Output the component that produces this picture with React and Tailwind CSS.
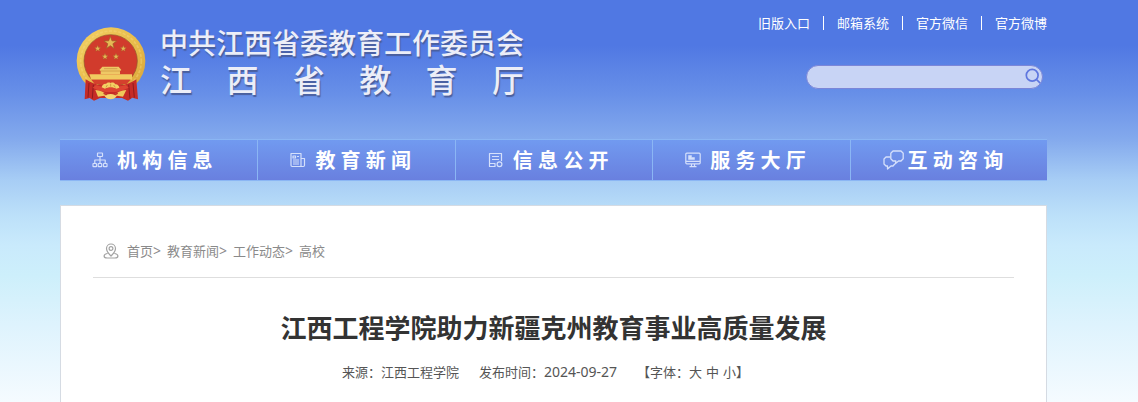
const topLinks = ['旧版入口', '邮箱系统', '官方微信', '官方微博'];
const crumbs = ['首页', '教育新闻', '工作动态', '高校'];
const fontSizes = ['大', '中', '小'];

const navItems = [
  { label: '机 构 信 息', Icon: OrgIcon },
  { label: '教 育 新 闻', Icon: NewsIcon },
  { label: '信 息 公 开', Icon: DocumentIcon },
  { label: '服 务 大 厅', Icon: ScreenIcon },
  { label: '互 动 咨 询', Icon: ChatIcon },
];

function Star({ x, y, r }) {
  return (
    <polygon
      transform={`translate(${x} ${y}) scale(${r})`}
      points="0,-1 0.25,-0.32 0.95,-0.31 0.38,0.12 0.59,0.81 0,0.4 -0.59,0.81 -0.38,0.12 -0.95,-0.31 -0.25,-0.32"
      fill="#e6b955"
      stroke="#9a5b24"
      strokeWidth="0.1"
    />
  );
}

function Emblem() {
  return (
    <svg className="h-[74px] w-[70px] shrink-0" viewBox="20 20 210 222" aria-hidden="true">
      <defs>
        <linearGradient id="gold" x1="0" y1="0" x2="1" y2="1">
          <stop offset="0" stopColor="#f3d166" />
          <stop offset="0.5" stopColor="#e9bd4c" />
          <stop offset="1" stopColor="#d9a338" />
        </linearGradient>
      </defs>
      {/* Wreath */}
      <ellipse cx="125" cy="122" rx="103" ry="101" fill="url(#gold)" />
      <ellipse cx="125" cy="122" rx="91" ry="90" fill="none" stroke="#f7dc83" strokeWidth="5" strokeDasharray="9 5" opacity="0.4" />
      <ellipse cx="124" cy="122" rx="80" ry="79" fill="#d13b2c" stroke="#8f5a2c" strokeWidth="2" />
      {/* Stars */}
      <Star x={123} y={68} r={20} />
      <Star x={85} y={85} r={10} />
      <Star x={162} y={85} r={10} />
      <Star x={107} y={109} r={10} />
      <Star x={140} y={109} r={10} />
      {/* Gate */}
      <path d="M99 139h49l8 10-4 3v10H94v-10l-4-3z" fill="#efc865" />
      <path d="M94 152h58M104 145h40" stroke="#b97c33" strokeWidth="1.5" />
      <path d="M60 162h128v16H66z" fill="#f1ca60" />
      <path d="M66 178h118l-12 13H76z" fill="#d4402d" />
      {/* Ribbons */}
      <path d="M49 177c16 10 30 16 48 18h56c20-2 33-8 48-18l5 60-17-5-13 9-18-8H92l-18 8-13-8-15 4z" fill="#c62c27" />
      <path d="M59 188l-3 44M72 193l-3 42M191 188l4 44M178 193l4 42" stroke="#8e1c1e" strokeWidth="3" />
      <path d="M80 194c18 6 30 6 44 6s30-1 46-6l8 8c-18 10-35 13-54 13s-38-3-54-13z" fill="#dc4432" />
      {/* Gear and wheat ends */}
      <path d="M97 201c2-8 8-12 13-10 4-5 9-5 14-3 6-3 11-1 14 4 6-1 11 4 12 10l-9 3c-10-6-24-6-34 0z" fill="#f3d063" />
      <path d="M110 201l4-7M124 199v-9M138 201l-5-7" stroke="#bd7e32" strokeWidth="2" />
      <path d="M78 209c14 0 26 8 37 14h18c11-7 24-14 38-14l-10 20-18-3c-8 9-29 11-38 0l-19 3z" fill="#efc85a" />
      <path d="M103 218l21 13 21-13" fill="none" stroke="#c4392a" strokeWidth="5" />
      <path d="M107 229c4-6 10-8 17-8s14 3 17 8c-9 10-25 10-34 0z" fill="#f5d673" />
    </svg>
  );
}

function NavSvg({ children }) {
  return (
    <svg
      className="size-4"
      viewBox="0 0 16 16"
      fill="none"
      stroke="currentColor"
      strokeWidth="1.2"
      strokeLinejoin="round"
      aria-hidden="true"
    >
      {children}
    </svg>
  );
}

function OrgIcon() {
  return (
    <NavSvg>
      <rect x="5.5" y="1" width="5" height="3.5" rx="0.5" />
      <path d="M8 4.5v6.5M2.8 11V8h10.4v3" />
      <rect x="1" y="11.5" width="3.5" height="3.2" rx="0.5" />
      <rect x="6.2" y="11.5" width="3.5" height="3.2" rx="0.5" />
      <rect x="11.5" y="11.5" width="3.5" height="3.2" rx="0.5" />
    </NavSvg>
  );
}

function NewsIcon() {
  return (
    <NavSvg>
      <path d="M11 14.5H2.2c-.7 0-1.2-.5-1.2-1.2V1.5h10v13zM11 6.5h3.5v6.8c0 .7-.5 1.2-1.2 1.2H11" />
      <path d="M3 4h2.5v2H3zM7 4.5h2M3 8h6M3 10h6M3 12h6" />
    </NavSvg>
  );
}

function DocumentIcon() {
  return (
    <NavSvg>
      <path d="M13.5 9V1.5h-12v13h6M4 4.5h7M4 7.5h7M1.5 11.5H7v3" />
      <circle cx="11.5" cy="12.2" r="2.4" />
    </NavSvg>
  );
}

function ScreenIcon() {
  return (
    <NavSvg>
      <rect x="0.8" y="1.2" width="14.4" height="10.6" rx="1" />
      <path d="M1 9.4h14M6.5 12v2.4M9.5 12v2.4M4.5 14.6h7" />
      <path d="M3.5 3.5h3v2h3v2h-6z" fill="currentColor" strokeWidth="0.5" />
    </NavSvg>
  );
}

function ChatIcon() {
  return (
    <svg
      className="h-5 w-[22px]"
      viewBox="0 0 22 20"
      fill="none"
      stroke="currentColor"
      strokeWidth="1.3"
      strokeLinejoin="round"
      aria-hidden="true"
    >
      <path d="M10 1h8l2.2 2.2v5.6L18 11h-2.5l-3 2.5.3-2.5H10L7.8 8.8V3.2z" />
      <path d="M7.5 7H3L1 9v5l2 2h1.5v3L8 16h2l2-2.2" />
    </svg>
  );
}

function PinIcon() {
  return (
    <svg
      className="size-4"
      viewBox="0 0 16 16"
      fill="none"
      stroke="#a3a3a3"
      strokeWidth="1.2"
      strokeLinecap="round"
      strokeLinejoin="round"
      aria-hidden="true"
    >
      <path d="M8 13C5.5 10.5 3.5 8 3.5 5.5a4.5 4.5 0 0 1 9 0C12.5 8 10.5 10.5 8 13z" />
      <circle cx="8" cy="5.5" r="1.9" />
      <path d="M4.2 10.5C2.3 11 1.1 11.9 1.1 13c0 1.2 1.4 2 3 2h7.8c1.6 0 3-.8 3-2 0-1.1-1.2-2-3.1-2.5" />
    </svg>
  );
}

function Header() {
  return (
    <header className="flex h-[139px] items-start justify-between">
      <a href="#" className="ml-4 mt-[27px] flex gap-3.5 text-[#eceef8]">
        <Emblem />
        <div className="-mt-px w-[364px] font-medium [text-shadow:1px_2px_1px_#4a5f9e]">
          <div className="whitespace-nowrap text-[28px] leading-[34px]">中共江西省委教育工作委员会</div>
          <div className="flex justify-between text-[32px] leading-10">
            {[...'江西省教育厅'].map((char) => (
              <span key={char}>{char}</span>
            ))}
          </div>
        </div>
      </a>

      <div className="flex flex-col items-end">
        <ul className="mt-3.5 flex items-center text-[13px] leading-[18px] text-white">
          {topLinks.map((link, i) => (
            <li key={link} className="flex items-center">
              {i > 0 && <span className="mx-[13px] h-3.5 w-px bg-white" />}
              <a href="#">{link}</a>
            </li>
          ))}
        </ul>
        <form
          className="mr-1 mt-[33px] flex h-6 w-[237px] items-center rounded-full border border-[#7b86d8] bg-[#c8d4f5]"
          onSubmit={(e) => e.preventDefault()}
        >
          <input type="text" aria-label="搜索" className="h-full min-w-0 flex-1 rounded-full px-3 text-[13px] outline-none" />
          <button type="submit" aria-label="搜索" className="mr-px shrink-0 pb-0.5 text-[#5f77df]">
            <svg className="size-4" viewBox="0 0 16 16" fill="none" stroke="currentColor" strokeWidth="1.7" strokeLinecap="round">
              <circle cx="7.2" cy="7.2" r="5.9" />
              <path d="M11.5 11.5l3.2 3.2" />
            </svg>
          </button>
        </form>
      </div>
    </header>
  );
}

function App() {
  return (
    <div className="min-h-screen bg-[linear-gradient(to_bottom,#5078e3_0px,#5078e3_45px,#6890e8_95px,#84aaed_140px,#a7cdf5_180px,#bce0f9_215px,#c9eafc_245px,#cdeffb_275px,#def3fd_325px,#f5fbff_402px)] pl-[60px] pr-[91px] font-['Noto_Sans','Noto_Sans_CJK_SC',sans-serif]">
      <Header />

      <nav className="grid grid-cols-5 border-y border-[#8bb6f4] bg-linear-to-b from-[#719af0] to-[#6980df]">
        {navItems.map(({ label, Icon }) => (
          <a
            key={label}
            href="#"
            className="flex h-10 items-center border-l border-[#8bb6f4] pl-8 text-white first:border-l-0"
          >
            <span className="w-[25px] shrink-0 text-[#d5e0fb]">
              <Icon />
            </span>
            <span className="whitespace-nowrap pt-0.5 text-xl font-bold">{label}</span>
          </a>
        ))}
      </nav>

      <main className="mt-6 min-h-[197px] border border-b-0 border-[#d5dbe3] bg-white px-8">
        <div className="flex h-[72px] items-end border-b border-[#dedede] pb-4 text-[13px] leading-5 text-[#8a8a8a]">
          <span className="ml-2.5 mr-2 pb-0.5">
            <PinIcon />
          </span>
          {crumbs.map((crumb, i) => (
            <span key={crumb} className="flex items-center">
              <a href="#">{crumb}</a>
              {i < crumbs.length - 1 && <span className="mr-1.5 text-sm leading-5">&gt;</span>}
            </span>
          ))}
        </div>

        <h1 className="mt-[30px] text-center text-[26px] font-bold leading-10 text-[#333]">
          江西工程学院助力新疆克州教育事业高质量发展
        </h1>
        <div className="mt-3.5 flex justify-center gap-5 pr-4 text-[13px] leading-5 text-[#555]">
          <span>来源：江西工程学院</span>
          <span className="flex">
            发布时间：<time className="text-sm leading-5">2024-09-27</time>
          </span>
          <span className="flex">
            【字体：
            <span className="flex gap-1">
              {fontSizes.map((size) => (
                <button key={size} type="button">{size}</button>
              ))}
            </span>
            】
          </span>
        </div>
      </main>
    </div>
  );
}

export default App;
